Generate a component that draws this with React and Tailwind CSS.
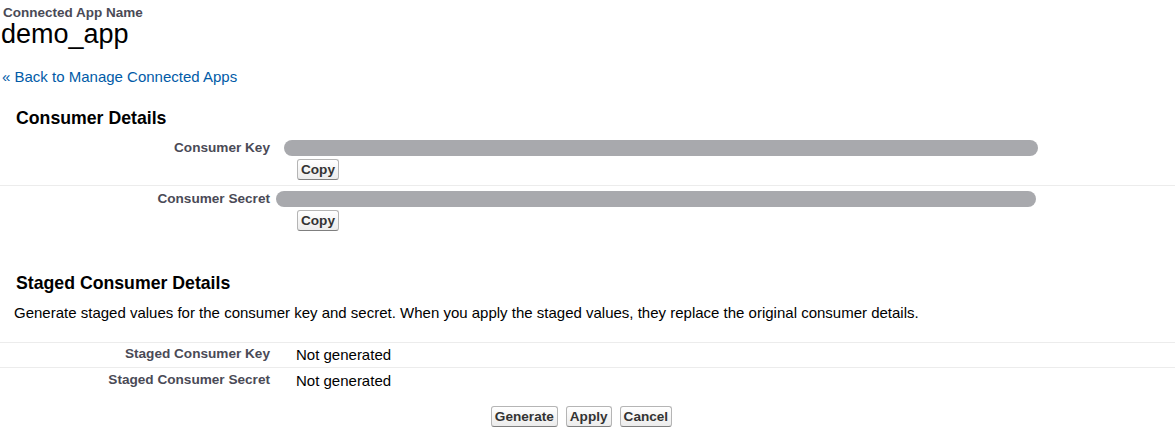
import React from "react";

const font = { fontFamily: '"Liberation Sans", Arial, sans-serif' };

function Btn({ children, className = "" }) {
  return (
    <button
      className={`h-[21px] px-[3px] rounded-[3px] border border-[#b5b5b5] border-b-[#7f7f7f] bg-gradient-to-b from-white to-[#ececec] text-[13.6px] leading-[17px] font-bold text-[#333] ${className}`}
    >
      {children}
    </button>
  );
}

function SecretRow({ label, barOffset, barWidth, border }) {
  return (
    <div className={`flex pt-[5px] pb-[5px] ${border ? "border-b border-[#ececec]" : ""}`}>
      <div className="w-[283px] pr-[13px] text-right text-[13.6px] leading-[16px] font-bold text-[#4a4a56] shrink-0">
        {label}
      </div>
      <div className="flex flex-col items-start pl-[14px]">
        <div className={`h-[16px] rounded-full bg-[#a8a9ad] ${barOffset} ${barWidth}`} />
        <Btn className="block mt-[3px]">Copy</Btn>
      </div>
    </div>
  );
}

function StagedRow({ label, value, border }) {
  return (
    <div className={`flex items-center h-[25px] ${border ? "border-b border-[#ececec]" : ""}`}>
      <div className="w-[283px] pr-[13px] text-right text-[13.6px] leading-[16px] font-bold text-[#4a4a56] shrink-0 -mt-[2px]">
        {label}
      </div>
      <div className="pl-[13px] text-[15px] leading-[18px] text-black">{value}</div>
    </div>
  );
}

export default function App() {
  return (
    <div className="w-[1175px] h-[433px] bg-white overflow-hidden" style={font}>
      {/* Page title */}
      <div className="pt-[5px] pl-[3px] text-[13.5px] leading-[16px] font-bold text-[#4a4a56]">
        Connected App Name
      </div>
      <div className="pl-[1px] text-[27px] leading-[26px] text-black">demo_app</div>
      <div className="mt-[21px] pl-[2px] text-[15px] leading-[18px]">
        <a href="#" className="text-[#015ba7]">« Back to Manage Connected Apps</a>
      </div>

      {/* Consumer Details */}
      <h3 className="mt-[21px] pl-[16px] text-[17.7px] leading-[22px] font-bold text-black">
        Consumer Details
      </h3>
      <div className="mt-[6px]">
        <SecretRow label="Consumer Key" barOffset="-ml-[13px]" barWidth="w-[754px]" border />
        <SecretRow label="Consumer Secret" barOffset="-ml-[21px]" barWidth="w-[760px]" />
      </div>

      {/* Staged Consumer Details */}
      <h3 className="mt-[36px] pl-[16px] text-[17.7px] leading-[22px] font-bold text-black">
        Staged Consumer Details
      </h3>
      <p className="mt-[10px] pl-[14px] text-[15px] leading-[18px] text-black">
        Generate staged values for the consumer key and secret. When you apply the staged values, they replace the original consumer details.
      </p>
      <div className="mt-[20px] border-t border-[#ececec]">
        <StagedRow label="Staged Consumer Key" value="Not generated" border />
        <StagedRow label="Staged Consumer Secret" value="Not generated" />
      </div>

      <div className="mt-[13px] flex justify-center gap-[8px] pr-[12px]">
        <Btn>Generate</Btn>
        <Btn>Apply</Btn>
        <Btn>Cancel</Btn>
      </div>
    </div>
  );
}
